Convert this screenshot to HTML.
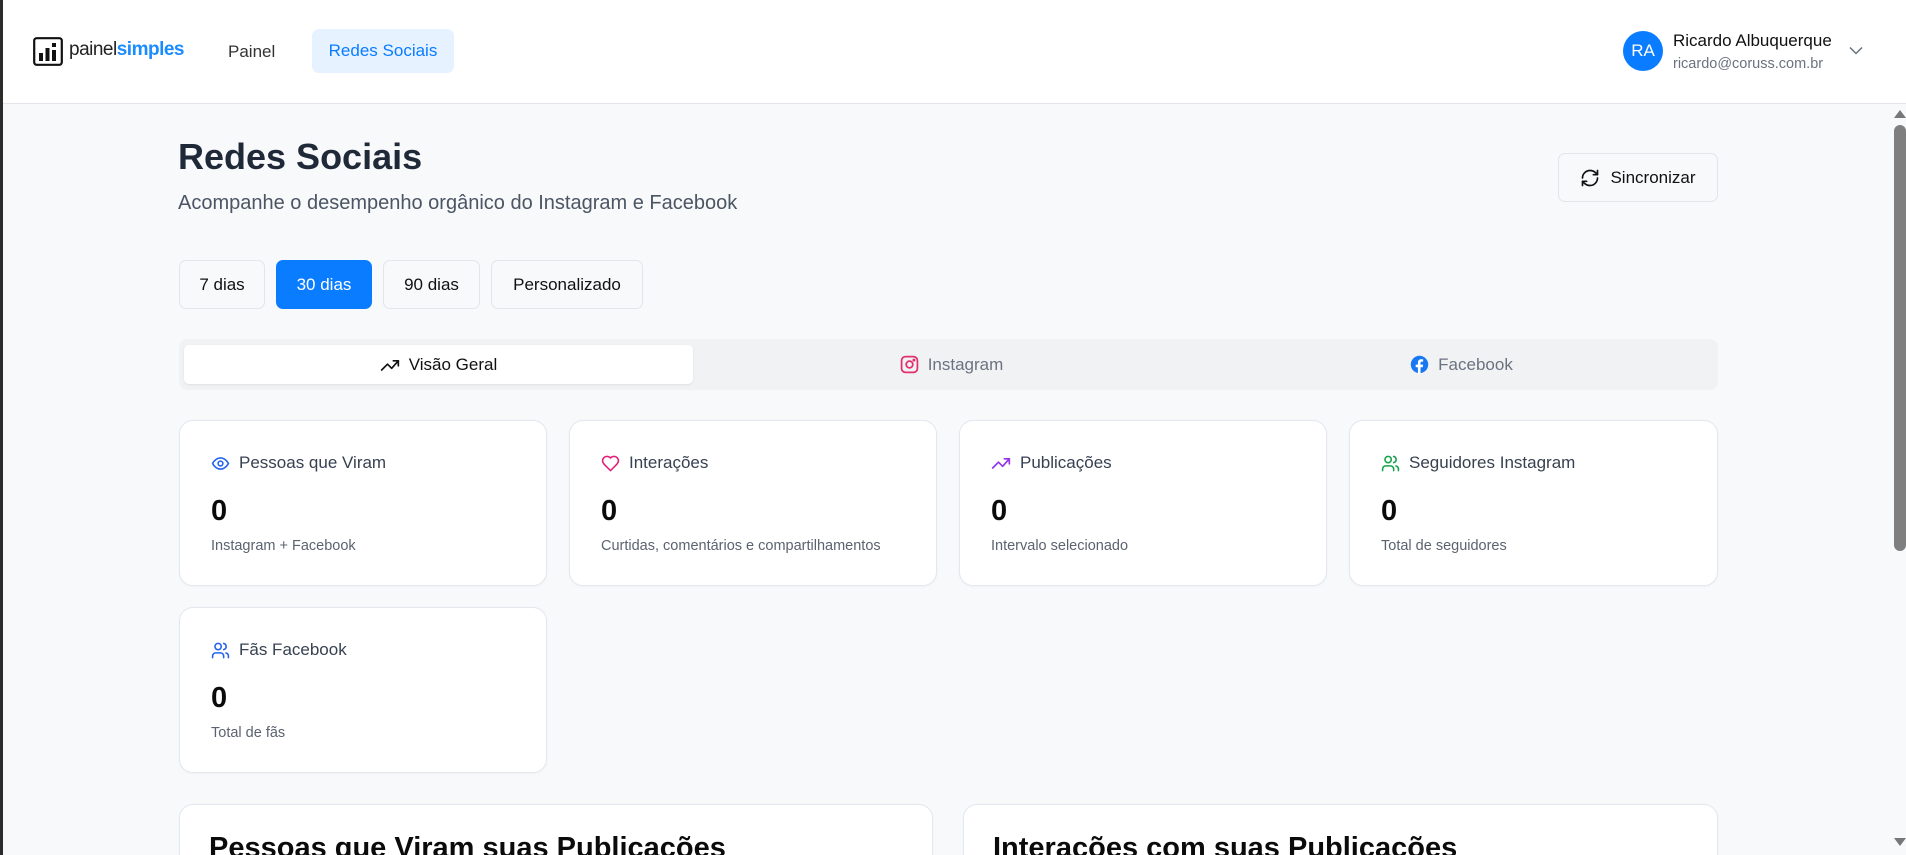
<!DOCTYPE html>
<html style="width:1906px;height:855px;overflow:hidden"><head><meta charset="utf-8"><style>
*{box-sizing:border-box;margin:0;padding:0}
body{width:1906px;height:855px;overflow:hidden;background:#f8f9fb;font-family:"Liberation Sans",Arial,sans-serif;position:relative;color:#111827}
.abs{position:absolute}
.hdr{left:0;top:0;width:1906px;height:104px;background:#fff;border-bottom:1px solid #e3e5ea}
.lb{left:0;top:0;width:3px;height:855px;background:#2b2b2b;z-index:5}
.btn{position:absolute;border:1px solid #e3e5ea;background:#f8f9fb;border-radius:7px;font-size:17px;display:flex;align-items:center;justify-content:center;color:#111}
.card{position:absolute;background:#fff;border:1px solid #e3e7ee;border-radius:14px;box-shadow:0 1px 2px rgba(0,0,0,.04)}
.card .lab{position:absolute;left:31px;top:32px;font-size:17px;color:#374151;display:flex;align-items:center;gap:9px}
.card .val{position:absolute;left:31px;top:74px;font-size:29px;font-weight:bold;color:#0b0b0b}
.card .sub{position:absolute;left:31px;top:117px;font-size:14.5px;color:#5b6370}
.tab{position:absolute;top:345px;height:39px;display:flex;align-items:center;justify-content:center;gap:9px;font-size:17px;color:#6b7280}
</style></head><body>
<div class="lb abs"></div>
<div class="hdr abs"></div>
<svg class="abs" style="left:33px;top:37px" width="30" height="29" viewBox="0 0 30 29"><rect x="1.2" y="1.2" width="27.6" height="26.6" rx="2.5" fill="none" stroke="#111" stroke-width="2.2"/><rect x="6" y="16" width="4" height="8" fill="#111"/><rect x="12.5" y="11" width="4" height="13" fill="#111"/><rect x="19" y="13" width="4" height="11" fill="#111"/><rect x="19" y="6" width="4" height="4" fill="#111"/></svg>
<div class="abs" style="left:69px;top:39px;font-size:19px;letter-spacing:-0.5px;color:#222">painel<b style="color:#1a8cff">simples</b></div>
<div class="abs" style="left:228px;top:42px;font-size:17px;color:#333">Painel</div>
<div class="abs" style="left:312px;top:29px;width:142px;height:44px;border-radius:7px;background:#e6f2ff;color:#0a7cff;font-size:17px;display:flex;align-items:center;justify-content:center">Redes Sociais</div>
<div class="abs" style="left:1623px;top:31px;width:40px;height:40px;border-radius:50%;background:#0a7cff;color:#fff;font-size:17px;display:flex;align-items:center;justify-content:center">RA</div>
<div class="abs" style="left:1673px;top:31px;font-size:17px;color:#111">Ricardo Albuquerque</div>
<div class="abs" style="left:1673px;top:56px;font-size:14.5px;color:#6b7280">ricardo@coruss.com.br</div>
<svg class="abs" style="left:1849px;top:46px" width="14" height="9" viewBox="0 0 14 9"><path d="M1 1.5l6 6 6-6" fill="none" stroke="#6b7280" stroke-width="1.5"/></svg>
<div class="abs" style="left:1894px;top:110px;width:0;height:0;border-left:6px solid transparent;border-right:6px solid transparent;border-bottom:8px solid #777"></div>
<div class="abs" style="left:1894px;top:125px;width:12px;height:426px;border-radius:6px;background:#7f7f7f"></div>
<div class="abs" style="left:1894px;top:838px;width:0;height:0;border-left:6px solid transparent;border-right:6px solid transparent;border-top:8px solid #777"></div>

<div class="abs" style="left:178px;top:136px;font-size:36px;font-weight:bold;color:#1f2937">Redes Sociais</div>
<div class="abs" style="left:178px;top:192px;font-size:20px;color:#4b5563">Acompanhe o desempenho orgânico do Instagram e Facebook</div>
<div class="btn" style="left:1558px;top:153px;width:160px;height:49px;gap:10px"><svg width="20" height="20" viewBox="0 0 24 24" fill="none" stroke="#111" stroke-width="2" stroke-linecap="round" stroke-linejoin="round"><path d="M3 12a9 9 0 0 1 9-9 9.75 9.75 0 0 1 6.74 2.74L21 8"/><path d="M21 3v5h-5"/><path d="M21 12a9 9 0 0 1-9 9 9.75 9.75 0 0 1-6.74-2.74L3 16"/><path d="M8 16H3v5"/></svg>Sincronizar</div>

<div class="btn" style="left:179px;top:260px;width:86px;height:49px">7 dias</div>
<div class="btn" style="left:276px;top:260px;width:96px;height:49px;background:#0a7cff;border-color:#0a7cff;color:#fff">30 dias</div>
<div class="btn" style="left:383px;top:260px;width:97px;height:49px">90 dias</div>
<div class="btn" style="left:491px;top:260px;width:152px;height:49px">Personalizado</div>

<div class="abs" style="left:179px;top:339px;width:1539px;height:51px;background:#f1f2f4;border-radius:8px"></div>
<div class="abs" style="left:184px;top:345px;width:509px;height:39px;background:#fff;border-radius:5px;box-shadow:0 1px 2px rgba(0,0,0,.08)"></div>
<div class="tab" style="left:184px;width:509px;color:#111"><svg width="20" height="14" viewBox="0 0 24 16" fill="none" stroke="#111" stroke-width="2" stroke-linecap="round" stroke-linejoin="round"><path d="M2 14l7-7 5 5 8-9"/><path d="M16 3h6v6"/></svg>Visão Geral</div>
<div class="tab" style="left:696px;width:511px"><svg width="19" height="19" viewBox="0 0 24 24" fill="none" stroke="#e1306c" stroke-width="2.2"><rect x="2" y="2" width="20" height="20" rx="5"/><circle cx="12" cy="12" r="4.2"/><circle cx="17.6" cy="6.4" r=".8" fill="#e1306c"/></svg>Instagram</div>
<div class="tab" style="left:1207px;width:509px"><svg width="19" height="19" viewBox="0 0 24 24"><circle cx="12" cy="12" r="11" fill="#1877f2"/><path d="M13.3 24v-8.6h2.8l.4-3.3h-3.2V10c0-.9.3-1.6 1.6-1.6h1.7V5.5c-.3 0-1.3-.1-2.5-.1-2.5 0-4.1 1.5-4.1 4.2v2.5H7.2v3.3H10V24z" fill="#fff"/></svg>Facebook</div>

<div class="card" style="left:179px;top:420px;width:368px;height:166px"><div class="lab"><svg width="19" height="19" viewBox="0 0 24 24" fill="none" stroke="#2563eb" stroke-width="2"><path d="M2 12s3.5-7 10-7 10 7 10 7-3.5 7-10 7S2 12 2 12z"/><circle cx="12" cy="12" r="3"/></svg>Pessoas que Viram</div><div class="val">0</div><div class="sub">Instagram + Facebook</div></div>
<div class="card" style="left:569px;top:420px;width:368px;height:166px"><div class="lab"><svg width="19" height="19" viewBox="0 0 24 24" fill="none" stroke="#e11d74" stroke-width="2" stroke-linejoin="round"><path d="M19 14c1.5-1.5 3-3.2 3-5.5A5.5 5.5 0 0 0 16.5 3c-1.8 0-3 .5-4.5 2-1.5-1.5-2.7-2-4.5-2A5.5 5.5 0 0 0 2 8.5c0 2.3 1.5 4 3 5.5l7 7z"/></svg>Interações</div><div class="val">0</div><div class="sub">Curtidas, comentários e compartilhamentos</div></div>
<div class="card" style="left:959px;top:420px;width:368px;height:166px"><div class="lab"><svg width="20" height="14" viewBox="0 0 24 16" fill="none" stroke="#9333ea" stroke-width="2" stroke-linecap="round" stroke-linejoin="round"><path d="M2 14l7-7 5 5 8-9"/><path d="M16 3h6v6"/></svg>Publicações</div><div class="val">0</div><div class="sub">Intervalo selecionado</div></div>
<div class="card" style="left:1349px;top:420px;width:369px;height:166px"><div class="lab"><svg width="19" height="19" viewBox="0 0 24 24" fill="none" stroke="#16a34a" stroke-width="2" stroke-linecap="round"><path d="M16 21v-2a4 4 0 0 0-4-4H6a4 4 0 0 0-4 4v2"/><circle cx="9" cy="7" r="4"/><path d="M22 21v-2a4 4 0 0 0-3-3.9"/><path d="M16 3.1a4 4 0 0 1 0 7.8"/></svg>Seguidores Instagram</div><div class="val">0</div><div class="sub">Total de seguidores</div></div>
<div class="card" style="left:179px;top:607px;width:368px;height:166px"><div class="lab"><svg width="19" height="19" viewBox="0 0 24 24" fill="none" stroke="#2563eb" stroke-width="2" stroke-linecap="round"><path d="M16 21v-2a4 4 0 0 0-4-4H6a4 4 0 0 0-4 4v2"/><circle cx="9" cy="7" r="4"/><path d="M22 21v-2a4 4 0 0 0-3-3.9"/><path d="M16 3.1a4 4 0 0 1 0 7.8"/></svg>Fãs Facebook</div><div class="val">0</div><div class="sub">Total de fãs</div></div>

<div class="card" style="left:179px;top:804px;width:754px;height:51px;border-bottom:none;border-radius:14px 14px 0 0;overflow:hidden"><div class="abs" style="left:29px;top:27px;font-size:29px;font-weight:bold;color:#0b0b0b;white-space:nowrap">Pessoas que Viram suas Publicações</div></div>
<div class="card" style="left:963px;top:804px;width:755px;height:51px;border-bottom:none;border-radius:14px 14px 0 0;overflow:hidden"><div class="abs" style="left:29px;top:27px;font-size:29px;font-weight:bold;color:#0b0b0b;white-space:nowrap">Interações com suas Publicações</div></div>
</body></html>
